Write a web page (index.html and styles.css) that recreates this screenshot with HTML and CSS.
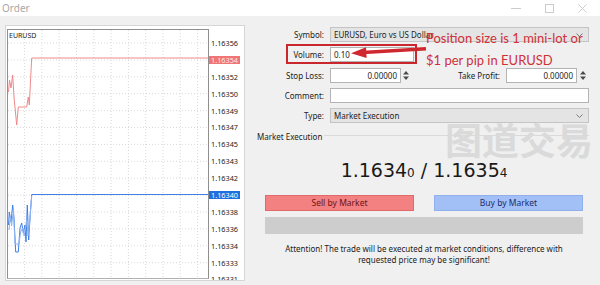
FILE: index.html
```html
<!DOCTYPE html>
<html>
<head>
<meta charset="utf-8">
<link rel="stylesheet" href="styles.css">
</head>
<body>
<div class="window">
  <div class="titlebar">
    <span class="title">Order</span>
    <div class="wincontrols">
      <svg class="wc" width="10" height="10" viewBox="0 0 10 10"><line x1="0" y1="5.5" x2="10" y2="5.5"/></svg>
      <svg class="wc" width="9" height="9" viewBox="0 0 9 9"><rect x="0.5" y="0.5" width="8" height="8"/></svg>
      <svg class="wc" width="9" height="9" viewBox="0 0 9 9"><path d="M0.5 0.5L8.5 8.5M8.5 0.5L0.5 8.5"/></svg>
    </div>
  </div>
  <div class="main">
    <div class="chart">
      <div class="plot">
        <svg class="plotsvg" width="200" height="249" viewBox="0 0 200 249">
          <g class="grid">
            <line x1="0" y1="13" x2="200" y2="13"/>
            <line x1="0" y1="29.9" x2="200" y2="29.9"/>
            <line x1="0" y1="46.8" x2="200" y2="46.8"/>
            <line x1="0" y1="63.7" x2="200" y2="63.7"/>
            <line x1="0" y1="80.6" x2="200" y2="80.6"/>
            <line x1="0" y1="97.5" x2="200" y2="97.5"/>
            <line x1="0" y1="114.4" x2="200" y2="114.4"/>
            <line x1="0" y1="131.3" x2="200" y2="131.3"/>
            <line x1="0" y1="148.2" x2="200" y2="148.2"/>
            <line x1="0" y1="165.1" x2="200" y2="165.1"/>
            <line x1="0" y1="182" x2="200" y2="182"/>
            <line x1="0" y1="198.9" x2="200" y2="198.9"/>
            <line x1="0" y1="215.8" x2="200" y2="215.8"/>
            <line x1="0" y1="232.7" x2="200" y2="232.7"/>
            <line x1="16.6" y1="0" x2="16.6" y2="249"/>
            <line x1="33.9" y1="0" x2="33.9" y2="249"/>
            <line x1="51.2" y1="0" x2="51.2" y2="249"/>
            <line x1="68.5" y1="0" x2="68.5" y2="249"/>
            <line x1="85.8" y1="0" x2="85.8" y2="249"/>
            <line x1="103.1" y1="0" x2="103.1" y2="249"/>
            <line x1="120.4" y1="0" x2="120.4" y2="249"/>
            <line x1="137.7" y1="0" x2="137.7" y2="249"/>
            <line x1="155" y1="0" x2="155" y2="249"/>
            <line x1="172.3" y1="0" x2="172.3" y2="249"/>
            <line x1="189.6" y1="0" x2="189.6" y2="249"/>
          </g>
          <polyline class="ask" points="0.5,62 1.5,50 3,58 4.7,45 6,67 8.7,95 10.3,77 18.7,77 20.3,67 21.3,75 23.7,28 200,28"/>
          <polyline class="bid" points="0.5,195 1.3,182 3,192 4.7,175 6,188 7.7,222 10.3,222 12,198 13.7,193 15.3,203 17,195 18,212 19.3,175 20.7,210 22,188 23.7,164.5 200,164.5"/>
          <polyline class="bid2" points="1,200 2.3,186 3.6,196 5.4,180 7,214 11,214 12.6,202 14.5,198 16.2,206 18.6,190 20,206 21.5,194 23.7,166"/>
        </svg>
        <span class="sym">EURUSD</span>
      </div>
      <div class="scale">
        <div class="lbl"><span>1.16356</span></div>
        <div class="lbl"><span class="hl-red">1.16354</span></div>
        <div class="lbl"><span>1.16352</span></div>
        <div class="lbl"><span>1.16350</span></div>
        <div class="lbl"><span>1.16349</span></div>
        <div class="lbl"><span>1.16347</span></div>
        <div class="lbl"><span>1.16345</span></div>
        <div class="lbl"><span>1.16343</span></div>
        <div class="lbl"><span>1.16342</span></div>
        <div class="lbl"><span class="hl-blue">1.16340</span></div>
        <div class="lbl"><span>1.16338</span></div>
        <div class="lbl"><span>1.16336</span></div>
        <div class="lbl"><span>1.16334</span></div>
        <div class="lbl"><span>1.16333</span></div>
        <div class="lbl"><span>1.16331</span></div>
      </div>
    </div>

    <div class="form">
      <div class="fields">
        <span class="flabel">Symbol:</span>
        <div class="select"><span>EURUSD, Euro vs US Dollar</span><svg class="chev" width="7" height="4" viewBox="0 0 7 4"><path d="M0.5 0.5L3.5 3.5L6.5 0.5"/></svg></div>

        <span class="flabel">Volume:</span>
        <div class="ctrlrow"><div class="input vol">0.10</div></div>

        <span class="flabel">Stop Loss:</span>
        <div class="ctrlrow">
          <div class="input num">0.00000</div>
          <svg class="spin" width="10" height="15" viewBox="0 0 10 15"><path d="M5 3L8 6.5H2Z"/><path d="M5 12L8 8.5H2Z"/></svg>
          <span class="tplabel">Take Profit:</span>
          <div class="input num">0.00000</div>
          <svg class="spin" width="12" height="15" viewBox="0 0 12 15"><path d="M6 3L9 6.5H3Z"/><path d="M6 12L9 8.5H3Z"/></svg>
        </div>

        <span class="flabel">Comment:</span>
        <div class="input"></div>

        <span class="flabel">Type:</span>
        <div class="select"><span>Market Execution</span><svg class="chev" width="7" height="4" viewBox="0 0 7 4"><path d="M0.5 0.5L3.5 3.5L6.5 0.5"/></svg></div>
      </div>

      <div class="section"><span>Market Execution</span><span class="rule"></span></div>

      <div class="price"><span>1.1634</span><span class="small">0</span><span> / </span><span>1.1635</span><span class="small">4</span></div>

      <div class="buttons">
        <div class="btn sell">Sell by Market</div>
        <div class="btn buy">Buy by Market</div>
      </div>
      <div class="bar"></div>
      <p class="attention">Attention! The trade will be executed at market conditions, difference with<br>requested price may be significant!</p>

      <div class="watermark">图道交易</div>
      <div class="volbox"></div>
      <svg class="arrow" width="85" height="18" viewBox="0 0 85 18"><line x1="18" y1="10.4" x2="81" y2="6.8"/><path d="M6 11.2L21 5.2L21.6 16Z"/></svg>
      <div class="note">Position size is 1 mini-lot or<br>$1 per pip in EURUSD</div>
    </div>
  </div>
</div>
</body>
</html>
```

FILE: styles.css
```css
* { box-sizing: border-box; }
html, body { margin: 0; padding: 0; }
body {
  width: 600px;
  height: 285px;
  overflow: hidden;
  background: #f0f0f0;
  font-family: "Noto Sans", "Open Sans", sans-serif;
  font-size: 8px;
  color: #1e1e1e;
}
.window { display: flex; flex-direction: column; height: 285px; }

.titlebar {
  height: 16px;
  background: #ffffff;
  display: flex;
  align-items: center;
  justify-content: space-between;
  padding: 0 13px 0 2px;
}
.title { font-size: 10px; color: #a8a8a8; line-height: 16px; }
.wincontrols { display: flex; gap: 24px; align-items: center; }
.wc { stroke: #cccccc; fill: none; stroke-width: 1; }

.main { flex: 1; display: flex; align-items: flex-start; }

.chart {
  margin: 9px 0 0 5px;
  width: 240px;
  height: 256px;
  background: #ffffff;
  border: 1px solid #d6d6d6;
  display: flex;
  padding: 3px 0 0 1px;
  overflow: hidden;
  flex: none;
}
.plot {
  position: relative;
  width: 202px;
  height: 250px;
  border: 1px solid #8f8f8f;
  border-bottom-color: #b0b0b0;
  flex: none;
}
.plotsvg { display: block; }
.grid line { stroke: #d9d9d9; stroke-width: 1; stroke-dasharray: 1 2; }
.ask { fill: none; stroke: #ef8a8a; stroke-width: 1; }
.bid { fill: none; stroke: #3f7fe6; stroke-width: 1; }
.bid2 { fill: none; stroke: #8fb4f2; stroke-width: 1; }
.sym {
  position: absolute;
  left: 1px;
  top: 1px;
  font-size: 7px;
  line-height: 9px;
  color: #222;
}
.scale {
  display: flex;
  flex-direction: column;
  padding: 5.5px 0 0 0;
  height: 252px;
  overflow: hidden;
}
.lbl {
  height: 16.9px;
  flex: none;
  display: flex;
  align-items: center;
  font-size: 7.3px;
  color: #222;
}
.lbl span { padding: 0 2px; line-height: 8px; }
.hl-red { background: #f07575; color: #fde8e8; }
.hl-blue { background: #1e6fe0; color: #ffffff; }

.form {
  position: relative;
  flex: 1;
  display: flex;
  flex-direction: column;
  padding: 11px 11px 0 0;
}
.fields {
  display: grid;
  grid-template-columns: 79px 1fr;
  grid-auto-rows: 15px;
  column-gap: 6px;
  row-gap: 5.25px;
}
.flabel {
  text-align: right;
  line-height: 15px;
  color: #222;
}
.select {
  background: #e4e4e4;
  border: 1px solid #c4c4c4;
  display: flex;
  align-items: center;
  justify-content: space-between;
  padding: 0 5px 0 3px;
  line-height: 13px;
}
.chev { stroke: #7a7a7a; fill: none; stroke-width: 1; }
.input {
  background: #ffffff;
  border: 1px solid #b4b4b4;
  line-height: 13px;
  padding: 0 3px;
  height: 15px;
}
.ctrlrow { display: flex; align-items: center; height: 15px; }
.vol { width: 84px; }
.num { width: 71px; text-align: right; flex: none; }
.spin { flex: none; fill: #4a4a4a; }
.tplabel { flex: 1; text-align: right; padding-right: 6px; line-height: 15px; color: #222; }

.section {
  display: flex;
  align-items: center;
  margin-top: 8px;
  padding-left: 12px;
  line-height: 11px;
  height: 11px;
  color: #222;
}
.rule { flex: 1; height: 1px; background: #dadada; margin: -2px 0 0 2px; }

.price {
  margin-top: 16px;
  padding: 0 6px 0 20px;
  display: flex;
  justify-content: center;
  align-items: baseline;
  white-space: pre;
  font-family: "DejaVu Sans", sans-serif;
  font-size: 19px;
  line-height: 24px;
  color: #1a1a1a;
}
.price .small { font-size: 12px; }

.buttons {
  display: flex;
  gap: 20px;
  margin-top: 10px;
  padding: 0 6px 0 20px;
}
.btn {
  flex: 1;
  height: 16px;
  line-height: 14px;
  text-align: center;
  font-size: 8.5px;
}
.sell { background: #f38181; border: 1px solid #e06a6a; color: #6e1212; }
.buy { background: #a2c0f6; border: 1px solid #8fb0ea; color: #1c2c6c; }
.bar {
  margin: 6px 6px 0 20px;
  height: 17px;
  background: #cdcdcd;
}
.attention {
  margin: 9px 0 0 0;
  padding: 0 6px 0 20px;
  text-align: center;
  line-height: 11px;
  color: #222;
}

.watermark {
  position: absolute;
  left: 200px;
  top: 106.5px;
  font-family: "Noto Sans CJK SC", sans-serif;
  font-weight: 700;
  font-size: 37px;
  line-height: 32px;
  color: #dadada;
  white-space: nowrap;
}
.volbox {
  position: absolute;
  left: 41px;
  top: 28px;
  width: 131px;
  height: 20px;
  border: 2px solid #c9262e;
}
.arrow { position: absolute; left: 100px; top: 26px; }
.arrow line { stroke: #d0282f; stroke-width: 3.5; }
.arrow path { fill: #d0282f; }
.note {
  position: absolute;
  left: 181px;
  top: 10.6px;
  font-family: "Lato", "Liberation Sans", sans-serif;
  font-size: 13px;
  line-height: 22px;
  color: #cf3038;
  white-space: nowrap;
}
```
